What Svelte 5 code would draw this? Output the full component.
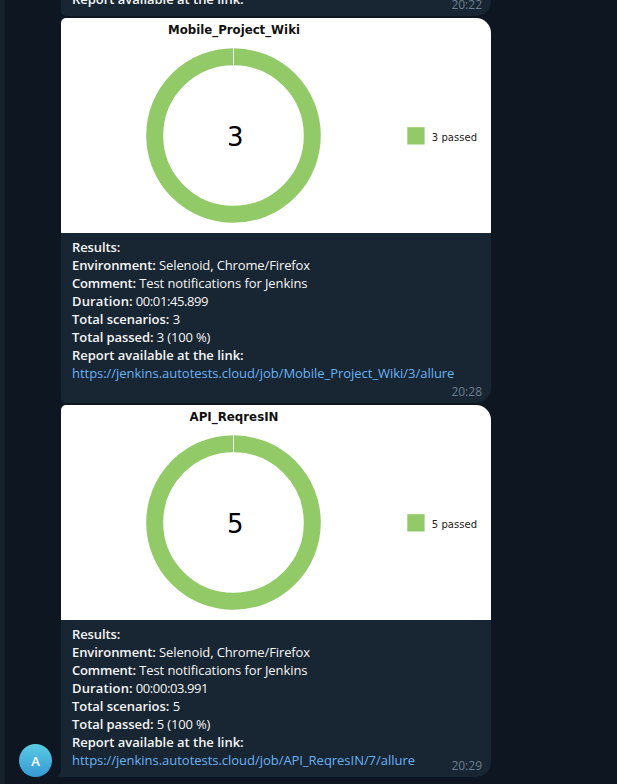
<script>
  const messages = [
    {
      title: 'Mobile_Project_Wiki', titleWidth: 132, count: 3, duration: '00:01:45.899',
      link: 'https://jenkins.autotests.cloud/job/Mobile_Project_Wiki/3/allure', time: '20:28'
    },
    {
      title: 'API_ReqresIN', titleWidth: 89, count: 5, duration: '00:00:03.991',
      link: 'https://jenkins.autotests.cloud/job/API_ReqresIN/7/allure', time: '20:29', last: true
    }
  ];
</script>

<div class="chat">
  <div class="rail"></div>
  <div class="avatar-column">
    <div class="avatar">A</div>
  </div>
  <main>
    <article class="previous">
      <div class="body"><b>Report available at the link:</b></div>
      <time>20:22</time>
    </article>
    {#each messages as m}
      <article class:last={m.last}>
        <svg class="chart" width="430" height="215" viewBox="0 0 430 215">
          <rect width="430" height="215" fill="#fff" />
          <text x="173" y="16.4" text-anchor="middle" class="title" textLength={m.titleWidth} lengthAdjust="spacingAndGlyphs">{m.title}</text>
          <circle cx="172.5" cy="117.5" r="78.8" fill="none" stroke="#92ca68" stroke-width="17" />
          <path d="M172.5 30V48.5" stroke="#fff" stroke-width="1" />
          <text x="174.2" y="127.5" text-anchor="middle" class="count">{m.count}</text>
          <rect x="346.3" y="109.2" width="17.3" height="17.3" fill="#92ca68" />
          <text x="370.7" y="122.7" class="legend" textLength="45.5">{m.count} passed</text>
        </svg>
        <div class="body">
          <div class="results"><b>Results:</b></div>
          <div class="environment"><b>Environment:</b> Selenoid, Chrome/Firefox</div>
          <div class="comment"><b>Comment:</b> Test notifications for Jenkins</div>
          <div class="duration"><b>Duration:</b> {m.duration}</div>
          <div class="scenarios"><b>Total scenarios:</b> {m.count}</div>
          <div class="passed"><b>Total passed:</b> {m.count} (100 %)</div>
          <div><b>Report available at the link:</b></div>
          <div class="link">{m.link}</div>
        </div>
        <time>{m.time}</time>
        {#if m.last}
          <svg class="tail" width="7" height="9" viewBox="0 0 7 9"><path d="M7 0V9H0C4 8 6 5 6 0Z" fill="#182533" /></svg>
        {/if}
      </article>
    {/each}
  </main>
</div>

<style>
  .chat {
    display: flex;
    width: 617px;
    height: 784px;
    overflow: hidden;
    background: #0e1621;
    font-family: "Open Sans", sans-serif;
    font-size: 13px;
    line-height: 18px;
    color: #f5f5f5;
  }
  .rail { width: 5px; background: #17212b; }
  .avatar-column {
    display: flex;
    align-items: flex-end;
    width: 56px;
    padding: 0 0 7px 14px;
    box-sizing: border-box;
  }
  .avatar {
    width: 33px;
    height: 33px;
    border-radius: 50%;
    background: linear-gradient(#5bcbe3, #359ad4);
    color: #fff;
    font-size: 13px;
    font-weight: 600;
    line-height: 35px;
    text-align: center;
  }
  main {
    display: flex;
    flex-direction: column;
    justify-content: flex-end;
    gap: 2px;
    width: 430px;
    padding-bottom: 7px;
  }
  article {
    position: relative;
    flex: none;
    height: 385px;
    border-radius: 5px 15px 15px 5px;
    background: #182533;
  }
  article.last { height: 372px; border-bottom-left-radius: 0; }
  article.previous { height: 40px; }
  .previous .body { padding-top: 14px; }
  .chart { display: block; border-radius: 5px 15px 0 0; }
  .body { padding: 5px 11px 0; white-space: nowrap; }
  b { font-weight: 600; letter-spacing: -0.02px; }
  .results b { letter-spacing: -0.12px; }
  .environment { letter-spacing: -0.12px; }
  .environment b { letter-spacing: -0.08px; }
  .comment { letter-spacing: -0.08px; }
  .comment b { letter-spacing: -0.2px; }
  .duration { letter-spacing: -0.4px; }
  .duration b { letter-spacing: 0.15px; }
  .scenarios b { letter-spacing: -0.05px; }
  .passed { letter-spacing: -0.15px; }
  .passed b { letter-spacing: -0.07px; }
  .link { color: #6ab3f3; letter-spacing: -0.03px; }
  time {
    position: absolute;
    right: 9px;
    bottom: 2px;
    font-size: 12px;
    color: #6d7f8f;
  }
  .tail { position: absolute; left: -6px; bottom: 0; }
  .title { font: bold 11.5px "DejaVu Sans", sans-serif; fill: #111; }
  .count { font: 26px "DejaVu Sans", sans-serif; fill: #000; }
  .legend { font: 10px "DejaVu Sans", sans-serif; fill: #222; }
</style>
